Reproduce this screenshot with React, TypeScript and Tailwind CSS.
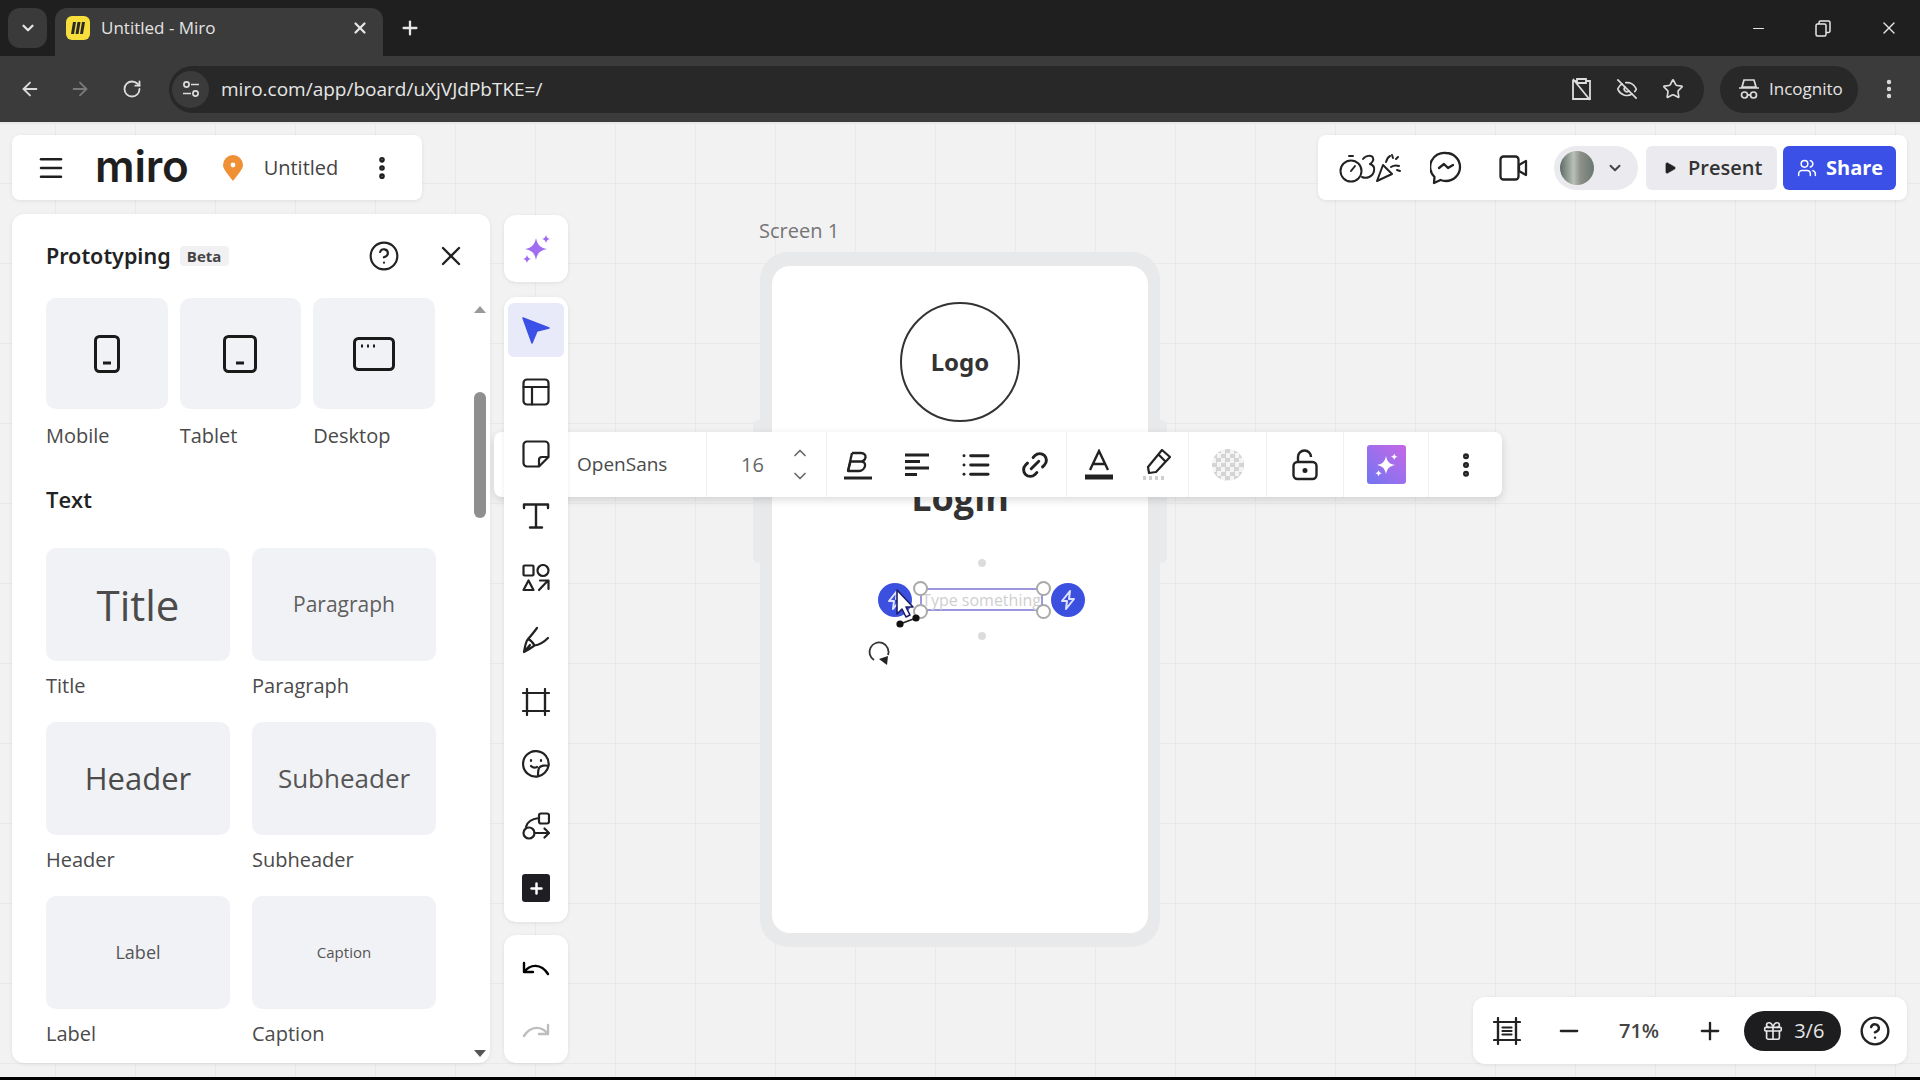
import { ReactNode } from 'react'
import {
  ArrowLeft, ArrowRight, RotateCw, Plus, X, ChevronDown, ChevronUp, Minus, Star, EyeOff,
  EllipsisVertical, Menu, CircleHelp, Link2, List, Gift, Play, Users,
} from 'lucide-react'

const sans = 'font-["Open_Sans",sans-serif]'

function Svg({ size = 28, box = 28, width = 2.2, className = '', children }: { size?: number; box?: number; width?: number; className?: string; children: ReactNode }) {
  return (
    <svg width={size} height={size} viewBox={`0 0 ${box} ${box}`} fill="none" stroke="currentColor" strokeWidth={width} strokeLinecap="round" strokeLinejoin="round" className={className}>
      {children}
    </svg>
  )
}

function Sparkle({ size, fill }: { size: number; fill: string }) {
  return (
    <svg width={size} height={size} viewBox="0 0 34 34" fill={fill}>
      <path d="M17 6c1.500 7 4 9.500 11 11-7 1.500-9.500 4-11 11-1.500-7-4-9.500-11-11 7-1.500 9.500-4 11-11z" />
      <path d="M27 3c.6 2.400 1.600 3.400 4 4-2.400.6-3.400 1.600-4 4-.6-2.400-1.600-3.400-4-4 2.400-.6 3.400-1.600 4-4z" />
      <path d="M8 23c.6 2.400 1.600 3.400 4 4-2.400.6-3.400 1.600-4 4-.6-2.400-1.600-3.400-4-4 2.400-.6 3.400-1.600 4-4z" />
    </svg>
  )
}

function TabBar() {
  return (
    <div className="h-14 shrink-0 bg-[#1f1f1f] flex items-start pl-2 pr-[21px]">
      <div className="mt-2 w-[39px] h-10 rounded-xl bg-[#3a3a3a] flex items-center justify-center text-[#e6e6e6]">
        <ChevronDown size={18} strokeWidth={3} />
      </div>
      <div className="ml-2 mt-2 w-[328px] h-12 rounded-t-xl bg-[#3b3b3b] flex items-center pb-2 pl-[11px] pr-[14px]">
        <div className="w-[24px] h-[24px] rounded-md bg-[#f7de3a] flex items-center justify-center">
          <svg width="16" height="14" viewBox="0 0 16 14" fill="#2a2a2a"><path d="M3 1h3L4 13H1zM7.5 1h3l-2 12h-3zM12 1h3l-2 12h-3z" /></svg>
        </div>
        <span className={`${sans} ml-[11px] text-[17px] text-[#e3e3e3] flex-1`}>Untitled - Miro</span>
        <X size={18} strokeWidth={3} className="text-[#e6e6e6]" />
      </div>
      <Plus size={22} strokeWidth={2.5} className="ml-[16px] mt-[17px] text-[#e6e6e6]" />
      <div className="ml-auto h-14 flex items-center gap-12 text-[#e6e6e6]">
        <Minus size={17} strokeWidth={1.6} />
        <svg width="16" height="17" viewBox="0 0 16 17" fill="none" stroke="currentColor" strokeWidth="1.5"><rect x="1" y="4" width="10" height="12" rx="1.5" /><path d="M4 4V2.5A1.5 1.5 0 0 1 5.5 1H13.5A1.5 1.5 0 0 1 15 2.5V11A1.5 1.5 0 0 1 13.5 12.5H11" /></svg>
        <X size={20} strokeWidth={1.6} />
      </div>
    </div>
  )
}

function AddressBar() {
  return (
    <div className="h-[66px] shrink-0 bg-[#3b3b3b] flex items-center text-[#dcdcdc]">
      <ArrowLeft size={22} strokeWidth={2} className="ml-[19px]" />
      <ArrowRight size={22} strokeWidth={2} className="ml-[28px] text-[#7a7a7a]" />
      <RotateCw size={20} strokeWidth={2.2} className="ml-[31px]" />
      <div className="ml-[27px] w-[1535px] h-[47px] rounded-full bg-[#282828] flex items-center pl-[3px] pr-5">
        <div className="w-[37px] h-[37px] rounded-full bg-[#3b3b3b] flex items-center justify-center">
          <svg width="20" height="20" viewBox="0 0 20 20" fill="none" stroke="currentColor" strokeWidth="1.7"><circle cx="5.5" cy="5.5" r="2.6" /><path d="M10 5.5h8M2 14.5h8" /><circle cx="14.5" cy="14.5" r="2.6" /></svg>
        </div>
        <span className={`${sans} ml-[12px] text-[19px] text-[#e6e6e6] flex-1`}>miro.com/app/board/uXjVJdPbTKE=/</span>
        <div className="flex items-center gap-[24px]">
          <svg width="21" height="24" viewBox="0 0 21 24" fill="none" stroke="currentColor" strokeWidth="1.8"><path d="M6 4H2v18h17V4h-4" /><path d="M6 2h9v4H6zM2 2l17 21" /></svg>
          <EyeOff size={22} strokeWidth={1.8} />
          <Star size={22} strokeWidth={1.8} />
        </div>
      </div>
      <div className="ml-[16px] w-[138px] h-[47px] rounded-full bg-[#282828] flex items-center pl-[17px]">
        <svg width="24" height="24" viewBox="0 0 24 24" fill="none" stroke="currentColor" strokeWidth="1.7"><path d="M7 3h10l2 7H5zM2 11h20" /><circle cx="7.5" cy="18" r="3" /><circle cx="16.5" cy="18" r="3" /><path d="M10.5 18h3" /></svg>
        <span className={`${sans} ml-[8px] text-[17px] text-[#e3e3e3]`}>Incognito</span>
      </div>
      <EllipsisVertical size={24} strokeWidth={2.4} className="ml-[19px]" />
    </div>
  )
}

function Bolt() {
  return (
    <svg width="20" height="22" viewBox="0 0 20 22" fill="none" stroke="currentColor" strokeWidth="2" strokeLinejoin="round"><path d="M12 2L4 12h5l-1 8 8-10h-5z" /></svg>
  )
}

// board content sits on a free canvas, so these keep their own coordinates
function Board() {
  return (
    <div className="absolute inset-0 bg-[#f2f2f3] bg-[linear-gradient(#e9e9ea_1px,transparent_1px),linear-gradient(90deg,#e9e9ea_1px,transparent_1px)] bg-[size:80px_80px] bg-[position:55px_61px]">
      <div className="absolute inset-x-0 top-0 h-[2px] bg-[#e8e8e8]" />
      <span className={`${sans} absolute left-[759px] top-[95px] text-[20px] leading-7 text-[#757575]`}>Screen 1</span>
      <div className="absolute left-[753px] top-[298px] w-[414px] h-[143px] rounded-md bg-[#e9eaec]" />
      <div className="absolute left-[760px] top-[130px] w-[400px] h-[695px] rounded-[28px] bg-[#e8e9eb]" />
      <div className="absolute left-[772px] top-[144px] w-[376px] h-[667px] rounded-[18px] bg-white" />
      <div className="absolute left-[900px] top-[180px] w-[120px] h-[120px] rounded-full border-2 border-[#333] flex items-center justify-center">
        <span className={'font-["Noto_Sans",sans-serif] font-bold text-[24px] text-[#333]'}>Logo</span>
      </div>
      <span className={`${sans} absolute left-[772px] w-[376px] text-center top-[352px] font-bold text-[36px] leading-[48px] text-[#333]`}>Login</span>

      <div className="absolute left-[978px] top-[437px] w-2 h-2 rounded-full bg-[#dcdcdc]" />
      <div className="absolute left-[978px] top-[510px] w-2 h-2 rounded-full bg-[#dcdcdc]" />
      <div className="absolute left-[878px] top-[461px] w-[34px] h-[34px] rounded-full bg-[#3c50e0] flex items-center justify-center text-[#dfe3ff]"><Bolt /></div>
      <div className="absolute left-[1051px] top-[461px] w-[34px] h-[34px] rounded-full bg-[#3c50e0] flex items-center justify-center text-[#dfe3ff]"><Bolt /></div>
      <div className="absolute left-[920px] top-[466px] w-[123px] h-[23px] border-2 border-[#9c97dc] flex items-center justify-center">
        <span className={`${sans} text-[16px] leading-5 whitespace-nowrap text-[#cfcfcf]`}>Type something</span>
      </div>
      {[[913, 459], [913, 482], [1036, 459], [1036, 482]].map(([x, y]) => (
        <div key={`${x}-${y}`} className="absolute w-[15px] h-[15px] rounded-full border-2 border-[#a9a9a9] bg-white" style={{ left: x, top: y }} />
      ))}
      <svg className="absolute left-[890px] top-[465px]" width="40" height="44" viewBox="0 0 40 44">
        <path d="M10 37L26 31" stroke="#222" strokeWidth="1.5" />
        <circle cx="10" cy="37" r="3.6" fill="#111" />
        <circle cx="26" cy="31" r="3.6" fill="#111" />
        <path d="M7 3v24l5-5 4 8 4-2-4-8h7z" fill="#fff" stroke="#1b1f66" strokeWidth="1.6" strokeLinejoin="round" />
      </svg>
      <svg className="absolute left-[866px] top-[516px]" width="28" height="28" viewBox="0 0 28 28" fill="none">
        <path d="M8 22A9.5 9.5 0 1 1 22 17" stroke="#333" strokeWidth="1.8" />
        <path d="M13 21l9-3-1 9z" fill="#222" />
      </svg>
    </div>
  )
}

function TopLeftCard() {
  return (
    <div className="w-[410px] h-[65px] rounded-lg bg-white shadow-[0_1px_4px_rgba(0,0,0,0.08)] flex items-center text-[#1f1f1f]">
      <Menu size={30} strokeWidth={2} className="ml-[24px]" />
      <span className={'font-["Inter",sans-serif] font-semibold text-[44px] leading-none ml-[29px] mb-[4px] tracking-[-0.2px]'}>miro</span>
      <svg className="ml-[33px]" width="22" height="26" viewBox="0 0 22 26"><path d="M11 26C5 18 1 14 1 10a10 10 0 0 1 20 0c0 4-4 8-10 16z" fill="#ef9037" /><circle cx="11" cy="10" r="2.4" fill="#fff" /></svg>
      <span className={`${sans} ml-[20px] text-[20px] text-[#444]`}>Untitled</span>
      <EllipsisVertical size={28} strokeWidth={2.8} className="ml-[30px]" />
    </div>
  )
}

function TopRightCard() {
  return (
    <div className="w-[589px] h-[65px] rounded-lg bg-white shadow-[0_1px_4px_rgba(0,0,0,0.08)] flex items-center text-[#222]">
      <svg className="ml-[21px]" width="62" height="34" viewBox="0 0 62 34" fill="none" stroke="currentColor" strokeWidth="2" strokeLinecap="round" strokeLinejoin="round">
        <circle cx="12" cy="20" r="10.5" /><path d="M12 20l4-5M10 5h4" />
        <path d="M24 8c3-4 9-4 10-1 1 2-1 5-3 6 3 1 5 3 4 7-1 6-8 8-12 6" />
        <path d="M38 30l6-16 9 9zM47 11c1-3 2-5 4-6M52 16c3-2 5-2 8-1M53 4l1 3M59 6l-2 2M61 20l-3-1" />
      </svg>
      <svg className="ml-[29px]" width="32" height="34" viewBox="0 0 32 34" fill="none" stroke="currentColor" strokeWidth="2.3" strokeLinejoin="round" strokeLinecap="round">
        <path d="M16 2a14 14 0 0 1 0 28c-2 0-4-.4-5.5-1L4 32l.5-6A14 14 0 0 1 16 2z" /><path d="M9 17l5-4 4 4 5-3" />
      </svg>
      <svg className="ml-[37px]" width="29" height="26" viewBox="0 0 29 26" fill="none" stroke="currentColor" strokeWidth="2.3" strokeLinejoin="round"><rect x="1.5" y="1.5" width="18" height="23" rx="3" /><path d="M20 10l7-4v14l-7-4z" /></svg>
      <div className="ml-[26px] w-[84px] h-[44px] rounded-full bg-[#ebebef] flex items-center pl-[6px]">
        <div className="w-[34px] h-[34px] rounded-full bg-[linear-gradient(90deg,#5d6b66,#b9c0b5_40%,#8c9189_60%,#6b7670)]" />
        <ChevronDown size={18} strokeWidth={2.6} className="ml-[12px] text-[#444]" />
      </div>
      <button className="ml-[8px] w-[131px] h-[44px] rounded-md bg-[#ebebef] flex items-center pl-[17px]">
        <Play size={14} fill="currentColor" strokeWidth={1} />
        <span className={`${sans} ml-[11px] text-[20px] font-semibold text-[#333]`}>Present</span>
      </button>
      <button className="ml-[6px] w-[113px] h-[44px] rounded-md bg-[#3a50e6] flex items-center pl-[14px] text-white">
        <Users size={20} strokeWidth={1.8} />
        <span className={`${sans} ml-[9px] text-[20px] font-bold`}>Share</span>
      </button>
    </div>
  )
}

function Tile({ label, tall = false, children }: { label: string; tall?: boolean; children: ReactNode }) {
  return (
    <div>
      <div className={`rounded-[10px] bg-[#f1f2f5] flex items-center justify-center ${tall ? 'h-[113px]' : 'h-[111px]'}`}>{children}</div>
      <p className={`${sans} text-[20px] leading-7 text-[#4a4a4a] ${tall ? 'mt-[11px]' : 'mt-[13px]'}`}>{label}</p>
    </div>
  )
}

function PrototypingPanel() {
  return (
    <div className="relative w-[478px] h-[849px] rounded-xl bg-white shadow-[0_1px_4px_rgba(0,0,0,0.08)] overflow-hidden">
      <div className="h-[84px] flex items-center pl-[34px] text-[#222]">
        <span className={'font-["Noto_Sans",sans-serif] font-semibold text-[21.5px]'}>Prototyping</span>
        <span className={`${sans} ml-[9px] w-[49px] h-[20px] rounded bg-[#f1f1f4] flex items-center justify-center text-[15px] font-bold text-[#444]`}>Beta</span>
        <CircleHelp size={32} strokeWidth={1.6} className="ml-[139px]" />
        <X size={32} strokeWidth={1.8} className="ml-[35px]" />
      </div>

      <div className="pl-[34px] w-[424px]">
        <div className="grid grid-cols-3 gap-x-3 w-[389px]">
          <Tile label="Mobile">
            <svg width="26" height="38" viewBox="0 0 26 38" fill="none" stroke="#1a1a1a" strokeWidth="3"><rect x="1.5" y="1.5" width="23" height="35" rx="4" /><path d="M9 28h8" /></svg>
          </Tile>
          <Tile label="Tablet">
            <svg width="34" height="38" viewBox="0 0 34 38" fill="none" stroke="#1a1a1a" strokeWidth="3"><rect x="1.5" y="1.5" width="31" height="35" rx="4" /><path d="M13 28h8" /></svg>
          </Tile>
          <Tile label="Desktop">
            <svg width="42" height="34" viewBox="0 0 42 34" fill="none" stroke="#1a1a1a" strokeWidth="3"><rect x="1.5" y="1.5" width="39" height="31" rx="4" /><path d="M8 9h2M14 9h2M20 9h2" /></svg>
          </Tile>
        </div>

        <h3 className={`${sans} mt-[35px] text-[22px] leading-7 font-semibold text-[#222]`}>Text</h3>

        <div className="mt-[35px] grid grid-cols-[184px_184px] gap-x-[22px] gap-y-[22px]">
          <Tile label="Title" tall><span className={`${sans} text-[42px] text-[#4b4b4b]`}>Title</span></Tile>
          <Tile label="Paragraph" tall><span className={`${sans} text-[21px] text-[#5f5f5f]`}>Paragraph</span></Tile>
          <Tile label="Header" tall><span className={`${sans} text-[31px] text-[#4b4b4b]`}>Header</span></Tile>
          <Tile label="Subheader" tall><span className={`${sans} text-[26px] text-[#555]`}>Subheader</span></Tile>
          <Tile label="Label" tall><span className={`${sans} text-[18px] text-[#555]`}>Label</span></Tile>
          <Tile label="Caption" tall><span className={`${sans} text-[15px] text-[#555]`}>Caption</span></Tile>
        </div>
      </div>

      <div className="absolute right-1 top-[88px] bottom-[6px] w-[13px] flex flex-col items-center">
        <div className="mt-1 w-0 h-0 border-x-[6px] border-x-transparent border-b-[7px] border-b-[#999]" />
        <div className="mt-[79px] w-[12px] h-[126px] rounded-full bg-[#8f8f8f]" />
        <div className="mt-auto w-0 h-0 border-x-[6px] border-x-transparent border-t-[7px] border-t-[#555]" />
      </div>
    </div>
  )
}

function ToolSlot({ children }: { children: ReactNode }) {
  return <div className="h-[62px] flex items-center justify-center text-[#222]">{children}</div>
}

function ToolColumn() {
  return (
    <div className="ml-[14px] w-16 flex flex-col">
      <div className="mt-px h-[67px] rounded-xl bg-white shadow-[0_1px_4px_rgba(0,0,0,0.08)] flex items-center justify-center">
        <Sparkle size={34} fill="#a06cf0" />
      </div>

      <div className="mt-[15px] h-[625px] pt-[2px] rounded-xl bg-white shadow-[0_1px_4px_rgba(0,0,0,0.08)]">
        <div className="mx-1 mt-1 mb-1 h-[54px] rounded-md bg-[#e8eafa] flex items-center justify-center">
          <svg width="28" height="28" viewBox="0 0 28 28" fill="#3a50e6" stroke="#3a50e6" strokeWidth="1.5" strokeLinejoin="round"><path d="M1 2l26 10-12 3-5 12z" /></svg>
        </div>
        <ToolSlot>
          <Svg><rect x="1.5" y="1.5" width="25" height="25" rx="3.5" /><path d="M1.5 9h25M10 9v17.500" /></Svg>
        </ToolSlot>
        <ToolSlot>
          <Svg><path d="M5 1.500h18a3.500 3.500 0 0 1 3.500 3.500v12L17 26.500H5A3.500 3.500 0 0 1 1.500 23V5A3.500 3.500 0 0 1 5 1.500z" /><path d="M26 17h-6a3 3 0 0 0-3 3v6" /></Svg>
        </ToolSlot>
        <ToolSlot>
          <Svg width={2.4}><path d="M2 6V2.500h24V6M14 2.500v23M8 25.500h12" /></Svg>
        </ToolSlot>
        <ToolSlot>
          <Svg><rect x="1.5" y="1.5" width="10" height="10" rx="1" /><circle cx="21" cy="6.500" r="5.500" /><path d="M6.500 16.500l5 9.500h-10zM17 26l9-9.500M18 16.500h8.500V25" /></Svg>
        </ToolSlot>
        <ToolSlot>
          <Svg><path d="M2 26c1-6 2-11 4-13 2.500 1 5 3.500 6.500 6.500C9 22 6 24 2 26zM2 26l6-7M6 13c3-3 6-7 9-11M12.500 19.500C17 19 22 16 26 12" /></Svg>
        </ToolSlot>
        <ToolSlot>
          <Svg><rect x="5" y="5" width="18" height="18" /><path d="M5 1v26M23 1v26M1 5h26M1 23h26" /></Svg>
        </ToolSlot>
        <ToolSlot>
          <Svg><path d="M26.500 16A12.800 12.800 0 1 0 16 26.500C21 25.500 25.500 21 26.500 16zM26.500 16c-3-1-8-.5-9.500 2-1 2-1 5-1 8.500" /><path d="M9 16c1.500 1.500 4 2 6 1M9 10v1M19 10v1" /></Svg>
        </ToolSlot>
        <ToolSlot>
          <Svg><rect x="17" y="1.500" width="10" height="10" rx="2" /><circle cx="7" cy="21" r="5.500" /><path d="M12.500 21H27M22.500 16.500L27 21l-4.500 4.500M4 15c1-5 5-8 13-9" /></Svg>
        </ToolSlot>
        <ToolSlot>
          <div className="w-7 h-7 rounded-[3px] bg-[#1f1f23] flex items-center justify-center"><Plus size={17} strokeWidth={3.5} className="text-white" /></div>
        </ToolSlot>
      </div>

      <div className="mt-[13px] h-[128px] rounded-xl bg-white shadow-[0_1px_4px_rgba(0,0,0,0.08)] flex flex-col items-center justify-center gap-[34px]">
        <Svg width={2.4}><path d="M2 9v9h9M2 18c6-8 17-9 24 2" /></Svg>
        <Svg width={2.4} className="text-[#bdbdbd]"><path d="M26 9v9h-9M26 18c-6-8-17-9-24 2" /></Svg>
      </div>
    </div>
  )
}

function ContextToolbar() {
  const section = 'h-full flex items-center justify-center border-l border-[#f0f0f0]'
  return (
    <div className="absolute z-10 left-[494px] top-[310px] w-[1008px] h-[65px] rounded-lg bg-white shadow-[0_3px_8px_rgba(0,0,0,0.14)] flex items-center text-[#222]">
      <div className="w-[212px] h-full flex items-center pl-[83px]">
        <span className={`${sans} text-[19px] text-[#4a4a4a]`}>OpenSans</span>
      </div>
      <div className={`${section} w-[120px] relative`}>
        <span className={`${sans} absolute left-[34px] text-[20px] text-[#666]`}>16</span>
        <div className="absolute left-[83px] flex flex-col gap-[3px] text-[#666]">
          <ChevronUp size={20} strokeWidth={2} />
          <ChevronDown size={20} strokeWidth={2} />
        </div>
      </div>
      <div className={`${section} w-[240px] gap-[27px] text-[#222]`}>
        <svg width="32" height="32" viewBox="0 0 32 32" fill="none" stroke="currentColor" strokeWidth="2.3" strokeLinejoin="round"><path d="M10 4h9c3 0 5 2 4.500 4.500S21 12.500 18 12.500h-9.500M8.500 12.500H19c3 0 4.500 2 4 4.500s-3 5-6 5H6z" /><path d="M10 4L6 22" /><path d="M2 29h28" strokeWidth="3" /></svg>
        <svg width="32" height="32" viewBox="0 0 32 32" fill="none" stroke="currentColor" strokeWidth="2.8"><path d="M4 6h24M4 12.500h15M4 19h24M4 25.500h12" /></svg>
        <List size={32} strokeWidth={2.2} />
        <Link2 size={32} strokeWidth={2.2} className="-rotate-45" />
      </div>
      <div className={`${section} w-[122px] gap-[28px]`}>
        <svg width="30" height="32" viewBox="0 0 30 32" fill="none" stroke="currentColor" strokeWidth="2.4"><path d="M6 21L15 2l9 19M9 15h12" /><path d="M1 28h28" strokeWidth="5" /></svg>
        <svg width="30" height="32" viewBox="0 0 30 32" fill="none" stroke="currentColor" strokeWidth="2.2" strokeLinejoin="round"><path d="M20 1l8 7-14 15-7 1-1-6zM16 5l8 8" /><path d="M1 29h24" stroke="#cfcfcf" strokeWidth="4" strokeDasharray="3 3" /></svg>
      </div>
      <div className={`${section} w-[78px]`}>
        <div className="w-8 h-8 rounded-full bg-[repeating-conic-gradient(#d4d4d4_0_25%,#f4f4f4_0_50%)] bg-[size:9px_9px]" />
      </div>
      <div className={`${section} w-[77px]`}>
        <svg width="26" height="32" viewBox="0 0 26 32" fill="none" stroke="currentColor" strokeWidth="2.4"><rect x="1.5" y="13" width="23" height="17" rx="4" /><path d="M6 13V8a6.500 6.500 0 0 1 13 0" /><circle cx="13" cy="21.500" r="1.300" fill="currentColor" /></svg>
      </div>
      <div className={`${section} w-[85px]`}>
        <div className="w-[39px] h-[39px] rounded-[3px] bg-gradient-to-tr from-[#6f74f2] to-[#c566e6] flex items-center justify-center">
          <Sparkle size={28} fill="#fff" />
        </div>
      </div>
      <div className={`${section} w-[74px]`}>
        <EllipsisVertical size={30} strokeWidth={2.8} />
      </div>
    </div>
  )
}

function ZoomCard() {
  return (
    <div className="absolute z-20 right-[13px] bottom-[13px] w-[434px] h-[67px] rounded-xl bg-white shadow-[0_1px_4px_rgba(0,0,0,0.08)] flex items-center text-[#222]">
      <Svg className="ml-[20px]"><rect x="5" y="5" width="18" height="18" /><path d="M5 1v26M23 1v26M1 5h26M1 23h26M9.500 10.500h9M9.500 14h9M9.500 17.500h9" /></Svg>
      <Minus size={28} strokeWidth={2} className="ml-[34px]" />
      <span className={`${sans} ml-[36px] text-[20px] font-semibold text-[#444]`}>71%</span>
      <Plus size={28} strokeWidth={2} className="ml-[37px]" />
      <div className="ml-5 w-[97px] h-10 rounded-full bg-[#1d1d1f] flex items-center pl-[18px] text-[#e6e6e6]">
        <Gift size={22} strokeWidth={1.8} />
        <span className={`${sans} ml-[10px] text-[20px]`}>3/6</span>
      </div>
      <CircleHelp size={32} strokeWidth={1.8} className="ml-[18px]" />
    </div>
  )
}

export default function App() {
  return (
    <div className="w-[1920px] h-[1080px] overflow-hidden flex flex-col bg-black">
      <TabBar />
      <AddressBar />
      <div className="relative h-[955px] shrink-0 overflow-hidden">
        <Board />
        <ContextToolbar />
        <div className="relative z-20 h-full flex flex-col">
          <div className="mt-[13px] px-3 pr-[13px] flex justify-between">
            <TopLeftCard />
            <TopRightCard />
          </div>
          <div className="mt-[14px] pl-3 flex items-start">
            <PrototypingPanel />
            <ToolColumn />
          </div>
        </div>
        <ZoomCard />
      </div>
    </div>
  )
}
